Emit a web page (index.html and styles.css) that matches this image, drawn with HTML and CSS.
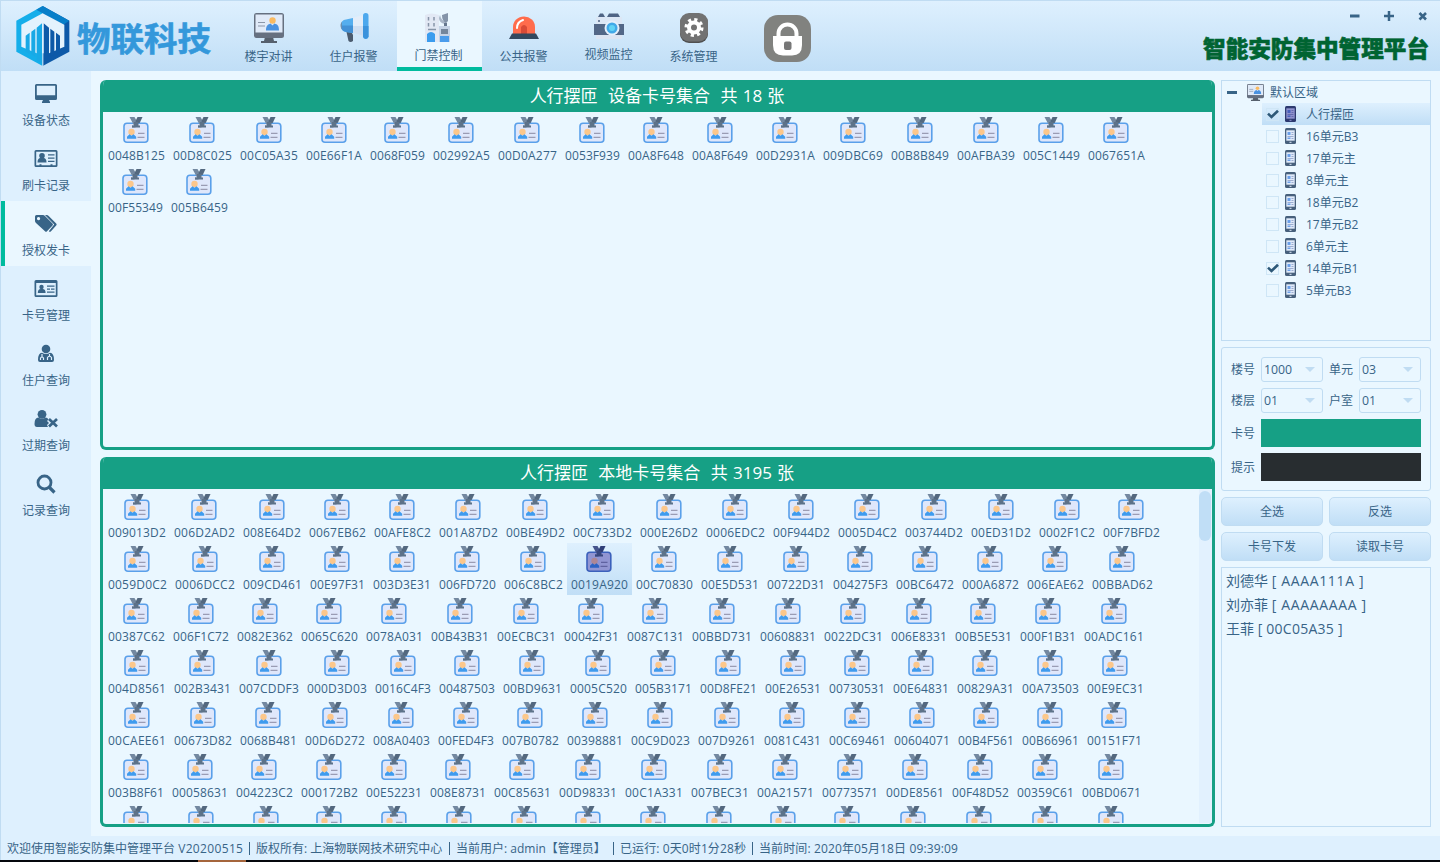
FILE: index.html
```html
<!DOCTYPE html>
<html lang="zh-CN">
<head>
<meta charset="utf-8">
<title>智能安防集中管理平台</title>
<link rel="stylesheet" href="styles.css">
</head>
<body>
<svg class="defs" width="0" height="0">
  <defs>
    <symbol id="card" viewBox="0 0 26 27">
      <rect x="1" y="6.2" width="23.8" height="19" rx="3" fill="#dfe7fb" stroke="#5aa0ea" stroke-width="1.6"/>
      <path d="M6.500 0h5l2 3.500-1 4.500v2.500H9V8.500h2z" fill="#7388a0"/>
      <path d="M14.500 0h5l-2.800 6h-3.700l-.5-2z" fill="#53687f"/>
      <path d="M11 5h4.500v3.500h1.500v2H9v-2h2z" fill="#5d7289"/>
      <circle cx="8.500" cy="15" r="3.200" fill="#fcc78b"/>
      <path d="M4 21.800v-2l2.500-2.600 2 1.500 2-1.500 2.700 2.600v2z" fill="#3f9bee"/>
      <path d="M15 16.300h6.500M14.500 20.300h7" stroke="#9a9cb4" stroke-width="1.300"/>
    </symbol>
    <symbol id="card-selected" viewBox="0 0 26 27">
      <rect x="1" y="6.2" width="23.8" height="19" rx="3" fill="#9195d2" stroke="#3b60bb" stroke-width="1.6"/>
      <path d="M6.500 0h5l2 3.500-1 4.500v2.500H9V8.500h2z" fill="#45548c"/>
      <path d="M14.500 0h5l-2.800 6h-3.700l-.5-2z" fill="#2f3e78"/>
      <path d="M11 5h4.500v3.500h1.500v2H9v-2h2z" fill="#38477f"/>
      <circle cx="8.500" cy="15" r="3.200" fill="#ad8795"/>
      <path d="M4 21.800v-2l2.500-2.600 2 1.500 2-1.500 2.700 2.600v2z" fill="#2c63c4"/>
      <path d="M15 16.300h6.500M14.500 20.300h7" stroke="#5f62a0" stroke-width="1.300"/>
    </symbol>
    <symbol id="pc" viewBox="0 0 30 30">
      <path d="M11 24h8l1 4h3v2H7v-2h3z" fill="#56606d"/>
      <rect x="0" y="0" width="30" height="25" rx="2.500" fill="#667080"/>
      <rect x="1.500" y="1.500" width="27" height="18" fill="#e0eaf8"/>
      <path d="M4 9.500h7M4 13h7" stroke="#8b96a8" stroke-width="1.200"/>
      <circle cx="18.500" cy="7.500" r="3.200" fill="#f9ba61"/>
      <path d="M12 17.500c0-5 2-6 4.500-7l2 2 2-2c3 1 4.500 2 4.500 7z" fill="#4a92e0"/>
    </symbol>
    <symbol id="phone" viewBox="0 0 11 16">
      <rect width="11" height="16" rx="1.500" fill="#47607c"/>
      <rect x="1.300" y="2.300" width="8.400" height="10.400" fill="#dfeafa"/>
      <path d="M2.500 4h3v3h-3zM2.500 9.500h3v1.500h-3z" fill="#6a9fea"/>
      <path d="M6.500 4.500h2M6.500 6.500h2M2.500 8.500h6M6.500 10.500h2" stroke="#8b9dc5" stroke-width=".8"/>
      <path d="M4.500 14.300h2" stroke="#dfeafa"/>
    </symbol>
    <symbol id="phone-selected" viewBox="0 0 11 16">
      <rect width="11" height="16" rx="1.500" fill="#2c396f"/>
      <rect x="1.300" y="2.300" width="8.400" height="10.400" fill="#8f92ce"/>
      <path d="M2.500 4h3v3h-3zM2.500 9.500h3v1.500h-3z" fill="#465fbc"/>
      <path d="M6.500 4.500h2M6.500 6.500h2M2.500 8.500h6M6.500 10.500h2" stroke="#5b60a5" stroke-width=".8"/>
      <path d="M4.500 14.300h2" stroke="#9195d2"/>
    </symbol>
    <symbol id="check" viewBox="0 0 12 10"><path d="M1 4.600L4.500 8 11 1.700" fill="none" stroke="#2d5878" stroke-width="2.600"/></symbol>
  </defs>
</svg>

<div class="window">
  <header class="header">
    <div class="brand">
      <svg class="logo" viewBox="0 0 160 180">
        <path d="M79 0L0 44v93l79 43z" fill="#15aeea"/>
        <path d="M79 0l80 44v93l-80 43z" fill="#0d59a8"/>
        <path d="M79 0l80 44-18 12L79 22 60 11z" fill="#087fc9"/>
        <path d="M15 56l64-34 65 34v66l-46 20H61l-46-20z" fill="#e3f2fd"/>
        <path d="M28 89l12-9v64l-12-7zM45 77l12-9v84l-12-7zM61 65l16-13v120l-16-8z" fill="#18a9e6"/>
        <path d="M131 89l-12-9v64l12-7zM114 77l-12-9v84l12-7zM98 65L82 52v120l16-8z" fill="#0d59a8"/>
        <path d="M79.500 50v130" stroke="#dceefc" stroke-width="3"/>
      </svg>
      <span class="brand-name">物联科技</span>
    </div>
    <nav class="nav">
      <div class="nav-item"><svg class="nav-icon" viewBox="-1 -1 32 32"><use href="#pc" width="30" height="30"/></svg><span>楼宇对讲</span></div>
      <div class="nav-item"><svg class="nav-icon" viewBox="0 0 32 32"><path d="M14 6l11-3v21l-11-3.500z" fill="#e3edf9"/><path d="M14 14h11v10l-11-3.500z" fill="#cfdff2"/><path d="M8.500 20h5l1.500 3v6q-2.500 2-4.500 0z" fill="#4b5b6e"/><path d="M15 6L8 7.500Q3 8 3 13.500T8 20l7 1z" fill="#55aeee"/><path d="M3 13.500h12V21l-7-1q-5-1-5-6.500z" fill="#4391d6"/><path d="M4 9.500q-3 4 0 8z" fill="#6c8fae"/><rect x="25" y="1" width="5.500" height="26" rx="2.700" fill="#4da8ed"/><path d="M25 14h5.500v10.500q-2.700 4.500-5.500 0z" fill="#3c93dc"/></svg><span>住户报警</span></div>
      <div class="nav-item active"><svg class="nav-icon" viewBox="0 0 32 32"><path d="M2 3q6-3 14 0v27H2z" fill="#e2e8f4"/><path d="M5.500 5v3.500M11 5v3.500M5.500 11v3.500M11 11v3.500M5 17.500h8" stroke="#8794a8" stroke-width="1.500"/><path d="M4 30v-8q4-4 8 0v8z" fill="#3b9cee"/><path d="M16 14h11v16H16z" fill="#c5d3e6"/><path d="M18 17h7v5h-7z" fill="#74869c"/><path d="M17 24h9v6h-9z" fill="#4a9cec"/><path d="M17 3q1 6 7 7l-2 2q-6-1-6-6z" fill="#a9b6c8"/><path d="M19 3l6-2v8l-2 2q-4-2-4-8z" fill="#8494a9"/><path d="M21 11h3v3h-3z" fill="#65778e"/></svg><span>门禁控制</span></div>
      <div class="nav-item"><svg class="nav-icon" viewBox="0 0 32 32"><path d="M5 22V15a11 10.500 0 0 1 22 0v7z" fill="#ff6c4c"/><path d="M13 22v-7q3-4 6 0v7z" fill="#d94b36"/><path d="M9 16q0-6 6-8" stroke="#fff" stroke-width="2" fill="none" stroke-linecap="round"/><path d="M4 21.500h24l3 5.500H1z" fill="#33495f"/></svg><span>公共报警</span></div>
      <div class="nav-item raised"><svg class="nav-icon" viewBox="0 0 32 32"><path d="M5 7l2-3.500h3L12 7zM14 7l2-3.500h9L27 7z" fill="#4f6484"/><path d="M3 7h26v8H3z" fill="#dce7f5"/><path d="M1 14h30v11H1z" fill="#526787"/><path d="M3 25h26v4H3z" fill="#dbe4f2"/><circle cx="19" cy="18" r="7.500" fill="#e5effb"/><circle cx="19" cy="18" r="5.500" fill="#42a9e8"/><circle cx="19" cy="18" r="3" fill="#62d4f5"/><circle cx="6" cy="11" r="1" fill="#506585"/></svg><span>视频监控</span></div>
      <div class="nav-item"><svg class="nav-icon" viewBox="0 0 32 32"><rect x="2" y="2" width="28" height="29" rx="9" fill="#505050"/><rect x="2" y="1" width="28" height="28.500" rx="9" fill="#727272"/><circle cx="16" cy="15.500" r="7.800" fill="none" stroke="#fff" stroke-width="3.500" stroke-dasharray="3.060 3.066"/><circle cx="16" cy="15.500" r="5" fill="none" stroke="#fff" stroke-width="4"/></svg><span>系统管理</span></div>
    </nav>
    <svg class="lock" viewBox="0 0 47 47"><rect width="47" height="47" rx="14" fill="#81827f"/><path d="M14.500 24v-5.500a9 9 0 0 1 18 0V24" fill="none" stroke="#fff" stroke-width="4"/><path d="M9 21h29v9q0 10.500-10 10.500h-9Q9 40.500 9 30z" fill="#fff"/><rect x="20" y="26.500" width="7.500" height="8.500" rx="2" fill="#777"/></svg>
    <div class="header-right">
      <div class="controls">
        <svg viewBox="0 0 10 10"><path d="M0 5h9.500" stroke="#386487" stroke-width="3"/></svg>
        <svg viewBox="0 0 10 10"><path d="M0 5h10M5 0v10" stroke="#386487" stroke-width="2.500"/></svg>
        <svg viewBox="0 0 10 10"><path d="M1.500 2l6.500 6.500M8 2L1.500 8.500" stroke="#386487" stroke-width="2.600"/></svg>
      </div>
      <h1 class="title">智能安防集中管理平台</h1>
    </div>
  </header>

  <div class="body">
    <aside class="side">
      <div class="side-item"><svg viewBox="0 0 24 22"><path fill-rule="evenodd" d="M2.500 1h19q1.500 0 1.500 1.500v13q0 1.500-1.500 1.500H15l1 2v1H8v-1l1-2H2.500Q1 17 1 15.500v-13Q1 1 2.500 1zm.3 1.800v9.400h18.400V2.800z"/></svg><span>设备状态</span></div>
      <div class="side-item"><svg viewBox="0 0 24 22"><path fill-rule="evenodd" d="M2 2h20q1.500 0 1.500 1.500v14Q23.500 19 22 19H2Q.5 19 .5 17.500v-14Q.5 2 2 2zm.2 1.700v13.600H5.500v-1h2v1h9v-1h2v1h3.300V3.700z"/><circle cx="8" cy="7.800" r="2.800"/><path d="M3.500 14.500q0-4.500 3-4.500h3q3 0 3 4.500zM14 6.300h6.500v1.300H14zM14 9.500h6.500v1.300H14zM14 12.700h6.500V14H14z"/></svg><span>刷卡记录</span></div>
      <div class="side-item active"><svg viewBox="0 0 24 22"><path fill-rule="evenodd" d="M2.500 2H9q1 0 2 1l7.500 7.500q1 1 0 2L13 18.300q-1 1-2 0L2 10Q1 9 1 8V3.500Q1 2 2.500 2zm2 2a1.600 1.600 0 1 0 .1 0z"/><path d="M11 2h1.700q1 0 2 1l7.500 7.500q1 1 0 2L17 18.300q-1 1-2.200 0l5.400-6.700z"/></svg><span>授权发卡</span></div>
      <div class="side-item"><svg viewBox="0 0 24 22"><path fill-rule="evenodd" d="M2 2h20q1.500 0 1.500 1.500v14Q23.500 19 22 19H2Q.5 19 .5 17.500v-14Q.5 2 2 2zm.2 3v12.300h19.600V5z"/><circle cx="7.500" cy="9" r="2.200"/><path d="M3.800 15q0-4 3-4h1.800q3 0 3 4zM13 7.500h7.500v1.300H13zM13 10.500h3v1.300h-3zM17 10.500h3.500v1.300H17zM13 13.500h7.500v1.200H13z"/></svg><span>卡号管理</span></div>
      <div class="side-item"><svg viewBox="0 0 24 22"><circle cx="12" cy="6" r="4.300"/><path d="M4 17q0-7 4-7.200 4 2.500 8 0 4 .2 4 7.200 0 2-2 2H6q-2 0-2-2z"/><path d="M8 11v3M6.500 17v-2q1.500-2 3 0v2M15.500 11v2M13.500 17v-2.500q2-2.500 4 0V17" fill="none" stroke="#def0fe" stroke-width="1.200"/></svg><span>住户查询</span></div>
      <div class="side-item"><svg viewBox="0 0 24 22"><circle cx="8" cy="6.300" r="4.400"/><path d="M.5 16q0-6.500 4-6.500 3.500 2.500 7 0 2 0 3 2L13 13l2 2-2 2 1 2H3q-2.500 0-2.500-3z"/><path d="M15 11l8 7.500M23 11l-8 7.500" fill="none" stroke="#386487" stroke-width="2.700"/></svg><span>过期查询</span></div>
      <div class="side-item"><svg viewBox="0 0 24 22"><circle cx="10.500" cy="9.500" r="6.500" fill="none" stroke="#386487" stroke-width="2.800"/><path d="M15 14l5.500 5.500" stroke="#386487" stroke-width="3.200"/></svg><span>记录查询</span></div>
    </aside>

    <main class="main">
      <section class="panel">
        <h2 class="panel-title">人行摆匝  设备卡号集合  共 18 张</h2>
        <div class="cards" id="device-cards"></div>
      </section>
      <section class="panel">
        <h2 class="panel-title">人行摆匝  本地卡号集合  共 3195 张</h2>
        <div class="panel-scroll">
          <div class="cards" id="local-cards"></div>
          <div class="scrollbar"><div class="thumb"></div></div>
        </div>
      </section>
    </main>

    <aside class="right">
      <div class="tree">
        <div class="tree-root"><i class="minus"></i><svg class="tree-pc"><use href="#pc"/></svg><span>默认区域</span></div>
        <div id="tree-items"></div>
      </div>
      <div class="form">
        <label>楼号</label><div class="select">1000</div><label>单元</label><div class="select">03</div>
        <label>楼层</label><div class="select">01</div><label>户室</label><div class="select">01</div>
        <label>卡号</label><div class="field green"></div>
        <label>提示</label><div class="field dark"></div>
      </div>
      <div class="buttons"><button>全选</button><button>反选</button><button>卡号下发</button><button>读取卡号</button></div>
      <div class="people"><div>刘德华 <span>[ AAAA111A ]</span></div><div>刘亦菲 <span>[ AAAAAAAA ]</span></div><div>王菲 <span class="digits">[ 00C05A35 ]</span></div></div>
    </aside>
  </div>

  <footer class="status">
    <span class="s1"><b>欢迎使用智能安防集中管理平台 <i class="version">V20200515</i></b></span><span class="s2">版权所有: 上海物联网技术研究中心</span><span class="s3">当前用户: admin【管理员】</span><span class="s4">已运行: 0天0时1分28秒</span><span class="s5">当前时间: 2020年05月18日 09:39:09</span>
  </footer>
  <div class="taskbar"><i></i></div>
</div>
<script src="app.js"></script>
</body>
</html>
```

FILE: styles.css
```css
* { box-sizing: border-box; }
body {
  margin: 0;
  width: 1440px;
  height: 862px;
  overflow: hidden;
  background: #eaf7ff;
  color: #386487;
  font: 12px/16px "Open Sans", "Noto Sans CJK SC", sans-serif;
}
.defs { position: absolute; }
svg { display: block; flex: none; }
.window { display: flex; flex-direction: column; height: 862px; border-left: 1px solid #c0dcf2; }

/* Header */
.header {
  display: flex;
  height: 71px;
  flex: none;
  border-top: 1px solid #c0dcf2;
  background: linear-gradient(#def0fe, #c0def6);
}
.brand { display: flex; width: 225px; padding: 5px 0 0 15px; }
.logo { width: 54px; height: 60px; }
.brand-name {
  margin-left: 7px;
  padding-top: 7px;
  font: bold 33.500px/48px "Noto Sans CJK SC", sans-serif;
  color: #3498db;
  -webkit-text-stroke: .6px #3498db;
  stroke-linejoin: round;
  white-space: nowrap;
}
.nav { display: flex; margin-right: 1px; }
.nav-item {
  display: flex;
  flex-direction: column;
  align-items: center;
  width: 85px;
  padding-top: 11px;
  border-bottom: 4px solid transparent;
}
.nav-item span { margin-top: 5px; line-height: 16px; }
.nav-icon { width: 32px; height: 32px; }
.nav-item.active { position: relative; left: 1px; background: #eaf7ff; border-color: #00bb9e; }
.nav-item.active span { margin-top: 4px; }
.nav-item.active .nav-icon, .nav-item.active span { transform: translateX(-1px); }
.nav-item.raised { padding-top: 9px; }
.lock { width: 47px; height: 47px; margin: 14px 0 0 27px; }
.header-right { display: flex; flex-direction: column; align-items: flex-end; margin-left: auto; padding-right: 11px; }
.controls { display: flex; gap: 24px; padding: 10px 1px 0 0; }
.controls svg { width: 10px; height: 10px; }
.title {
  margin: 11px 0 0;
  font: 900 22.600px/32px "Noto Sans CJK SC", sans-serif;
  color: #006432;
  -webkit-text-stroke: .6px #006432;
}

/* Sidebar */
.body { display: flex; height: 765px; flex: none; }
.side { width: 90px; background: #def0fe; }
.side-item {
  display: flex;
  flex-direction: column;
  align-items: center;
  height: 65px;
  padding-top: 12px;
}
.side-item svg { width: 24px; height: 22px; fill: #386487; }
.side-item span { margin-top: 8px; }
.side-item.active { background: #eaf7ff; box-shadow: inset 4px 0 #00bb9e; }

/* Card panels */
.main { display: flex; flex-direction: column; gap: 7px; width: 1124px; padding: 9px 0 0 9px; }
.panel {
  width: 1115px;
  height: 370px;
  border: 3px solid #16a085;
  border-top: 0;
  border-radius: 6px;
  overflow: hidden;
}
.panel-title {
  margin: 0 -3px;
  padding-right: 1px;
  height: 32px;
  background: #16a085;
  color: #fff;
  font-weight: 400;
  font-size: 17px;
  line-height: 32px;
  text-align: center;
  white-space: pre;
  word-spacing: .8px;
}
.panel-scroll { display: flex; justify-content: space-between; height: 334px; overflow: hidden; }
.cards { padding: 2px 0 0 1px; }
.card-row { display: flex; height: 52px; }
.card { display: flex; flex-direction: column; align-items: center; height: 52px; padding-top: 3px; }
.card svg { width: 26px; height: 27px; margin-right: 1px; }
.card span { margin-top: 4px; white-space: nowrap; }
.card.selected { background: linear-gradient(#def0fe, #c0def6); }
.scrollbar { width: 13px; padding: 2px 1px 0 0; background: #e2f1fe; }
.thumb { height: 50px; border-radius: 6px; background: #c0def6; }

/* Right column */
.right { width: 210px; margin-left: 6px; padding-top: 9px; }
.tree { height: 261px; border: 1px solid #c0dcf2; }
.tree-root { display: flex; align-items: center; height: 22px; padding-left: 5px; }
.tree-root span { padding-top: 1px; }
.minus { width: 10px; height: 3px; background: #386487; }
.tree-pc { width: 17px; height: 17px; margin: 0 6px 0 10px; }
.tree-item { display: flex; align-items: center; height: 22px; margin-left: 40px; padding-left: 4px; }
.tree-item span { padding-top: 1px; }
.tree-item.selected { background: linear-gradient(#def0fe, #c0def6); }
.box { display: flex; align-items: center; justify-content: center; width: 13px; height: 13px; border: 1px solid #cfe6f6; }
.box svg { width: 12px; height: 10px; }
.tree-phone { width: 11px; height: 16px; margin: 0 10px 0 6px; }
.form {
  display: grid;
  grid-template-columns: 24px 62px 24px 62px;
  grid-template-rows: 25px 25px 28px 28px;
  gap: 6px;
  align-items: center;
  height: 144px;
  margin-top: 6px;
  padding: 9px;
  border: 1px solid #c0dcf2;
  border-radius: 3px;
}
.form label { padding-top: 1px; }
.select {
  display: flex;
  align-items: center;
  justify-content: space-between;
  height: 25px;
  padding: 0 7px 0 2px;
  border: 1px solid #c0dcf2;
  border-radius: 3px;
  font-size: 12.300px;
}
.select::after { content: ""; border: 5px solid transparent; border-top-color: #c0dcf2; border-bottom: 0; }
.field { grid-column: span 3; height: 28px; }
.green { background: #16a085; }
.dark { background: #282d30; }
.buttons { display: grid; grid-template-columns: 102px 102px; gap: 6px; margin: 6px 0; }
button {
  height: 29px;
  padding: 0;
  border: 1px solid #c0dcf2;
  border-radius: 5px;
  background: linear-gradient(#def0fe, #c0def6);
  color: #386487;
  font: inherit;
}
.people { height: 260px; padding: 1px 0 0 4px; border: 1px solid #c0dcf2; font-size: 14px; line-height: 24px; }
.people span { letter-spacing: .65px; }
.people .digits { letter-spacing: .25px; }

/* Status bar */
.status { display: flex; align-items: center; height: 24px; flex: none; padding: 1px 0 0 6px; background: #def0fe; white-space: nowrap; }
.status b { font-weight: 400; }
.version { font-style: normal; letter-spacing: .35px; }
.status span { display: flex; justify-content: space-between; height: 16px; }
.status span + span { padding-left: 6px; }
.status span:not(:last-child)::after { content: ""; width: 1px; height: 13px; margin-top: 1px; background: #386487; }
.s1 { width: 243px; }
.s2 { width: 200px; }
.s3 { width: 164px; }
.s4 { width: 139px; letter-spacing: .1px; }
.s5 { letter-spacing: .12px; }
.taskbar { height: 2px; flex: none; margin-left: -1px; padding-left: 198px; background: #05080d; }
.taskbar i { display: block; width: 48px; height: 2px; background: #a5653c; }
```

FILE: app.js
```js
const deviceCards = [
  "0048B125 00D8C025 00C05A35 00E66F1A 0068F059 002992A5 00D0A277 0053F939 00A8F648 00A8F649 00D2931A 009DBC69 00B8B849 00AFBA39 005C1449 0067651A",
  "00F55349 005B6459"
];
const localCards = [
  "009013D2 006D2AD2 008E64D2 0067EB62 00AFE8C2 001A87D2 00BE49D2 00C733D2 000E26D2 0006EDC2 00F944D2 0005D4C2 003744D2 00ED31D2 0002F1C2 00F7BFD2",
  "0059D0C2 0006DCC2 009CD461 00E97F31 003D3E31 006FD720 006C8BC2 0019A920 00C70830 00E5D531 00722D31 004275F3 00BC6472 000A6872 006EAE62 00BBAD62",
  "00387C62 006F1C72 0082E362 0065C620 0078A031 00B43B31 00ECBC31 00042F31 0087C131 00BBD731 00608831 0022DC31 006E8331 00B5E531 000F1B31 00ADC161",
  "004D8561 002B3431 007CDDF3 000D3D03 0016C4F3 00487503 00BD9631 0005C520 005B3171 00D8FE21 00E26531 00730531 00E64831 00829A31 00A73503 00E9EC31",
  "00CAEE61 00673D82 0068B481 00D6D272 008A0403 00FED4F3 007B0782 00398881 00C9D023 007D9261 0081C431 00C69461 00604071 00B4F561 00B66961 00151F71",
  "003B8F61 00058631 004223C2 000172B2 00E52231 008E8731 00C85631 00D98331 00C1A331 007BEC31 00A21571 00773571 00DE8561 00F48D52 00359C61 00BD0671"
];
// Widths of the partly scrolled last row
const lastRow = [64, 66, 64, 63, 66, 64, 66, 63, 67, 65, 63, 65, 67, 65, 67, 64];

const advance = { A: 8, B: 8, C: 8, D: 9, E: 7, F: 6 };
const textWidth = s => [...s].reduce((w, c) => w + (advance[c] || 7), 0);
const ctx = document.createElement("canvas").getContext("2d");
ctx.font = '12px "Open Sans"';

function addCard(row, width, text) {
  const selected = text === "0019A920";
  const card = document.createElement("div");
  card.className = "card" + (selected ? " selected" : "");
  card.style.width = width + "px";
  card.innerHTML = `<svg><use href="#card${selected ? "-selected" : ""}"/></svg><span></span>`;
  const label = card.querySelector("span");
  label.textContent = text;
  if (text) label.style.letterSpacing = (textWidth(text) - ctx.measureText(text).width) / text.length + "px";
  row.appendChild(card);
}
function addRow(host) {
  const row = document.createElement("div");
  row.className = "card-row";
  host.appendChild(row);
  return row;
}
function fill(id, rows) {
  const host = document.getElementById(id);
  rows.forEach(line => {
    const row = addRow(host);
    line.split(" ").forEach(t => addCard(row, textWidth(t) + 8, t));
  });
  return host;
}
fill("device-cards", deviceCards);
const last = addRow(fill("local-cards", localCards));
lastRow.forEach(w => addCard(last, w, ""));

const tree = [["人行摆匝", 1], ["16单元B3"], ["17单元主"], ["8单元主"], ["18单元B2"], ["17单元B2"], ["6单元主"], ["14单元B1", 1], ["5单元B3"]];
document.getElementById("tree-items").innerHTML = tree.map(([name, on], i) =>
  `<div class="tree-item${i ? "" : " selected"}"><i class="box">${on ? '<svg><use href="#check"/></svg>' : ""}</i>` +
  `<svg class="tree-phone"><use href="#phone${i ? "" : "-selected"}"/></svg><span>${name}</span></div>`).join("");
```
